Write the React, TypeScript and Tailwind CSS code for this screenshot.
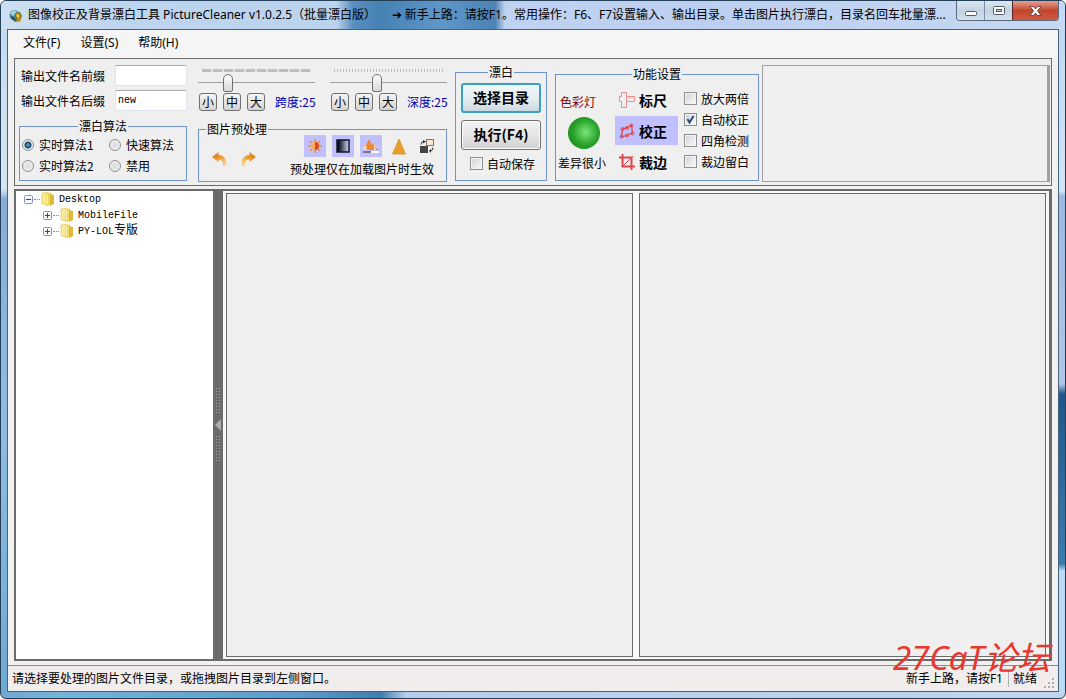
import { useState } from "react";
import type { ReactNode } from "react";

const uiFont = "font-['Noto_Sans','Noto_Sans_CJK_SC',sans-serif]";
const cjkFont = "font-['Noto_Sans_CJK_SC',sans-serif]";

function AppIcon() {
  return (
    <svg width="13" height="13" viewBox="0 0 13 13" className="shrink-0" aria-hidden="true">
      <circle cx="5.5" cy="6" r="5" fill="#4d8fb0" />
      <path d="M1 4l4-3 3 2-4 4z" fill="#a8d7e8" />
      <path d="M6 4l5-1 2 4-2 5-6 1z" fill="#6f7a2a" />
      <path d="M7 5l3 0 1 3-3 1z" fill="#f0bf3c" />
      <path d="M1 7l4 1 2 4-4-1z" fill="#28536f" />
      <path d="M8 10l3-2 1 4-3 1z" fill="#c98a23" />
    </svg>
  );
}

function TitleBar() {
  return (
    <header className="flex h-7 shrink-0 items-start bg-[linear-gradient(90deg,#cddff0_0,#bdd4ee_140px,#bcd3ee_335px,#5a8fc0_352px,#4681b4_380px,#5f97c9_440px,#4c82b4_494px,#bfd2f0_504px,#bccff0_700px,#c6d8f2_100%)] pl-2">
      <div className="flex h-7 min-w-0 flex-1 items-center gap-1.5">
        <AppIcon />
        <h1 className="truncate text-xs leading-5 text-black">
          图像校正及背景漂白工具 PictureCleaner v1.0.2.5（批量漂白版）&nbsp;&nbsp;&nbsp;&nbsp; ➔ 新手上路：请按F1。常用操作：F6、F7设置输入、输出目录。单击图片执行漂白，目录名回车批量漂...
        </h1>
      </div>
      <div className="mr-1.5 flex h-5 shrink-0 overflow-hidden rounded-b border border-t-0 border-[#59697e]">
        <button type="button" aria-label="最小化" className="flex w-7 items-center justify-center border-r border-[#7b8da3] bg-linear-to-b from-[#dce7f3] via-[#c3d2e3] to-[#d3e2f1]">
          <svg width="12" height="14" viewBox="0 0 12 14">
            <rect x="0.5" y="7.5" width="11" height="4" rx="1" fill="#fff" stroke="#535a66" />
          </svg>
        </button>
        <button type="button" aria-label="最大化" className="flex w-[27px] items-center justify-center bg-linear-to-b from-[#dce7f3] via-[#c3d2e3] to-[#d3e2f1]">
          <svg width="12" height="12" viewBox="0 0 12 12">
            <rect x="0.5" y="1.5" width="11" height="8" rx="1" fill="#fff" stroke="#535a66" />
            <rect x="3.5" y="4.5" width="5" height="2" fill="#c3d2e3" stroke="#535a66" />
          </svg>
        </button>
        <button type="button" aria-label="关闭" className="flex w-[46px] items-center justify-center border-l border-[#5b2324] bg-linear-to-b from-[#e3a08f] via-[#c3442c] to-[#cf5a40]">
          <svg width="13" height="12" viewBox="0 0 13 12">
            <path d="M1 1.500h3.500l2 2.500 2-2.500H12L8.500 6 12 10.500H8.500l-2-2.500-2 2.500H1L4.500 6z" fill="#fff" stroke="#5a3138" strokeWidth=".8" />
          </svg>
        </button>
      </div>
    </header>
  );
}

function MenuBar() {
  return (
    <nav className="flex h-7 shrink-0 items-center gap-5 bg-[#f5f5f5] px-[15px] pb-0.5 text-xs text-black">
      <button type="button">文件(F)</button>
      <button type="button">设置(S)</button>
      <button type="button">帮助(H)</button>
    </nav>
  );
}

function Group({ title, className = "", legendClass = "", children }: {
  title: string;
  className?: string;
  legendClass?: string;
  children: ReactNode;
}) {
  return (
    <fieldset className={`min-w-0 border border-[#6f95c8] ${className}`}>
      <legend className={`px-px leading-[14px] ${legendClass}`}>{title}</legend>
      {children}
    </fieldset>
  );
}

function NameField({ id, label, value }: { id: string; label: string; value: string }) {
  return (
    <div className="flex items-center justify-between">
      <label htmlFor={id} className="pl-0.5">{label}</label>
      <input
        id={id}
        type="text"
        defaultValue={value}
        className="h-[21px] w-[72px] border border-[#e2e3ea] border-t-[#abadb3] bg-white px-0.5 font-['Liberation_Mono',monospace] text-[10px]"
      />
    </div>
  );
}

function Radio({ label, checked }: { label: string; checked?: boolean }) {
  return (
    <label className="flex items-center gap-[5px]">
      <input
        type="radio"
        name="algorithm"
        defaultChecked={checked}
        className="size-3 appearance-none rounded-full border border-[#8e8f8f] bg-[radial-gradient(circle,#d8dadc,#f6f6f6)] checked:bg-[radial-gradient(circle,#5fb5e0_0,#173f63_3px,#e8edf0_4px)]"
      />
      {label}
    </label>
  );
}

function CheckBox({ label, checked }: { label: string; checked?: boolean }) {
  return (
    <label className="flex h-[21px] items-center gap-1">
      <span className="grid">
        <input
          type="checkbox"
          defaultChecked={checked}
          className="peer col-start-1 row-start-1 size-[13px] appearance-none border border-[#8e8f8f] bg-linear-to-br from-[#cfd3d7] to-[#fafafa] shadow-[inset_0_0_0_1px_#f4f4f4]"
        />
        <svg viewBox="0 0 13 13" className="pointer-events-none invisible col-start-1 row-start-1 size-[13px] peer-checked:visible">
          <path d="M3.500 6l2 3.500L9.500 3" fill="none" stroke="#30487c" strokeWidth="2" />
        </svg>
      </span>
      {label}
    </label>
  );
}

function Tuner({ name, max, tickClass }: { name: string; max: number; tickClass: string }) {
  const [value, setValue] = useState(25);
  return (
    <div className="w-[121px]">
      <div className={`mx-1 mt-1 h-[3px] w-[109px] ${tickClass}`} />
      <input
        type="range"
        aria-label={name}
        min={0}
        max={max}
        value={value}
        onChange={(e) => setValue(Number(e.target.value))}
        className="block h-[21px] w-[117px] appearance-none bg-[linear-gradient(#a0a0a0,#a0a0a0)] bg-[length:100%_1px] bg-center bg-no-repeat [&::-webkit-slider-thumb]:h-[18px] [&::-webkit-slider-thumb]:w-[10px] [&::-webkit-slider-thumb]:appearance-none [&::-webkit-slider-thumb]:rounded-xs [&::-webkit-slider-thumb]:rounded-t-[5px] [&::-webkit-slider-thumb]:border [&::-webkit-slider-thumb]:border-[#707070] [&::-webkit-slider-thumb]:bg-linear-to-b [&::-webkit-slider-thumb]:from-white [&::-webkit-slider-thumb]:to-[#d6d6d6]"
      />
      <div className="flex items-center gap-1.5 pl-px">
        {["小", "中", "大"].map((size) => (
          <button
            key={size}
            type="button"
            className="flex size-[18px] items-center justify-center rounded-[3px] border border-[#707070] bg-linear-to-b from-[#f4f4f4] to-[#d4d4d4] leading-none"
          >
            {size}
          </button>
        ))}
        <output className="ml-1 whitespace-nowrap text-[#0000b4]">{name}:{value}</output>
      </div>
    </div>
  );
}

function IconToggle({ label, active, children }: { label: string; active?: boolean; children: ReactNode }) {
  return (
    <button
      type="button"
      aria-label={label}
      aria-pressed={!!active}
      className={`flex size-[22px] items-center justify-center ${active ? "bg-[#c0c0ff]" : ""}`}
    >
      {children}
    </button>
  );
}

function CurvedArrow({ flip }: { flip?: boolean }) {
  return (
    <svg width="16" height="16" viewBox="0 0 16 16" className={flip ? "-scale-x-100" : ""}>
      <path d="M0 6l6.500-5v3C12 4 15 8 14.500 15H11c.5-4-1-6.500-4.500-6.500V11z" fill="url(#arrow)" />
      <defs>
        <linearGradient id="arrow" x1="0" y1="0" x2="1" y2="1">
          <stop offset="0" stopColor="#d9720c" />
          <stop offset=".5" stopColor="#ee9c32" />
          <stop offset="1" stopColor="#fbe3b0" />
        </linearGradient>
      </defs>
    </svg>
  );
}

function Preprocess() {
  return (
    <Group title="图片预处理" className="mt-[11px] h-[60px] w-[249px]" legendClass="ml-[7px]">
      <div className="flex justify-between pr-3 pl-[13px]">
        <div className="flex items-center gap-3">
          <button type="button" aria-label="撤销"><CurvedArrow /></button>
          <button type="button" aria-label="重做"><CurvedArrow flip /></button>
        </div>
        <div>
          <div className="-mt-px -mr-1 flex justify-end gap-1.5">
            <IconToggle label="亮度" active>
              <svg width="16" height="16" viewBox="0 0 16 16">
                <path d="M8 1v3M8 12v3M1 8h3M12 8h3M3 3l2 2M11 11l2 2M13 3l-2 2M3 13l2-2" stroke="#f08a3c" strokeWidth="1.500" />
                <circle cx="8" cy="8" r="4" fill="#f7ae62" />
                <path d="M8 4a4 4 0 010 8z" fill="#e2461a" />
              </svg>
            </IconToggle>
            <IconToggle label="对比度" active>
              <svg width="16" height="16" viewBox="0 0 16 16">
                <defs>
                  <linearGradient id="contrast">
                    <stop offset="0.150" stopColor="#0a0f22" />
                    <stop offset="1" stopColor="#d5daf5" />
                  </linearGradient>
                </defs>
                <rect x="2" y="2" width="12" height="12" fill="url(#contrast)" stroke="#10142c" strokeWidth="1.500" />
              </svg>
            </IconToggle>
            <IconToggle label="色阶" active>
              <svg width="18" height="16" viewBox="0 0 18 16">
                <path d="M1 12V9l3-2 3-6 3 6 2-2 2 5 3 2z" fill="#ed8b35" />
                <path d="M1 12V9l3-2 1 5zM12 12V5l1 2 1 5z" fill="#f9d9b0" />
                <path d="M1 13h16v2H1z" fill="#fff" />
                <path d="M1 13h8v2H1z" fill="#82718f" />
              </svg>
            </IconToggle>
            <IconToggle label="锐化">
              <svg width="14" height="17" viewBox="0 0 14 17">
                <path d="M7 1l6.500 15H.5z" fill="#e8a02c" stroke="#d48a1c" strokeWidth=".7" />
              </svg>
            </IconToggle>
            <IconToggle label="反色">
              <svg width="16" height="16" viewBox="0 0 16 16">
                <rect x="7.500" y="1.500" width="7" height="6" fill="#fbe6cf" stroke="#777" />
                <rect x="1" y="8" width="8" height="7" fill="#444" />
                <path d="M2 6.500q0-3 3-3M14 9.500q0 3.500-3 3.500" fill="none" stroke="#333" />
                <path d="M4 2l3 1.500-3 2zM12 11v4l-2-2z" fill="#333" />
              </svg>
            </IconToggle>
          </div>
          <p className="leading-6">预处理仅在加载图片时生效</p>
        </div>
      </div>
    </Group>
  );
}

function ToolButton({ label, active, children }: { label: string; active?: boolean; children: ReactNode }) {
  return (
    <button
      type="button"
      aria-pressed={!!active}
      className={`flex h-[29px] w-[63px] items-center gap-1 pl-1 text-sm font-bold ${active ? "bg-[#c0c0ff]" : ""}`}
    >
      <svg width="16" height="16" viewBox="0 0 16 16" fill="none" stroke="#e0474c">
        {children}
      </svg>
      {label}
    </button>
  );
}

function FunctionSettings() {
  return (
    <Group title="功能设置" className="mt-0.5 h-[114px] w-[204px] shrink-0" legendClass="mx-auto">
      <div className="flex pl-0.5">
        <div className="flex w-[57px] flex-col justify-between pt-3 pb-1 leading-[18px]">
          <span className="pl-0.5 text-[#800000]">色彩灯</span>
          <span className="ml-2.5 size-8 rounded-full bg-[radial-gradient(circle_at_55%_48%,#7be47b_0,#2da42d_50%,#0b770b_100%)]" />
          <span>差异很小</span>
        </div>
        <div className="flex flex-col gap-0.5 pt-1">
          <ToolButton label="标尺">
            <path d="M2.500 .5h5v4h8v5h-8v6h-5v-6h-2v-5h2z" stroke="#ee8d8d" />
            <path d="M7.500 4.500v5M10.500 4.500v2M13 4.500v2" stroke="#ee8d8d" />
          </ToolButton>
          <ToolButton label="校正" active>
            <path d="M3.500 6l4-1 5-3 1 8-5 2-6 2z" strokeWidth="1.300" />
            <circle cx="3.500" cy="6" r="1.500" />
            <circle cx="12.500" cy="2.500" r="1.500" />
            <circle cx="13.500" cy="10.500" r="1.500" />
            <circle cx="2.500" cy="13.500" r="1.500" />
            <circle cx="8" cy="5" r="1.500" />
            <circle cx="8" cy="12.500" r="1.500" />
          </ToolButton>
          <ToolButton label="裁边">
            <path d="M0 3.500h12.500V16M3.500 0v12.500H16" strokeWidth="2" />
            <path d="M4 12l10-10" />
          </ToolButton>
        </div>
        <div className="flex flex-col pt-[7px] pl-1.5">
          <CheckBox label="放大两倍" />
          <CheckBox label="自动校正" checked />
          <CheckBox label="四角检测" />
          <CheckBox label="裁边留白" />
        </div>
      </div>
    </Group>
  );
}

function Toolbar() {
  return (
    <section className={`flex h-32 shrink-0 overflow-hidden border border-[#6b6b6b] bg-[#efefef] pt-1.5 pl-1 text-xs leading-4 text-black ${cjkFont}`}>
      <div className="w-[168px] shrink-0">
        <div className="flex flex-col gap-1">
          <NameField id="prefix" label="输出文件名前缀" value="" />
          <NameField id="suffix" label="输出文件名后缀" value="new" />
        </div>
        <Group title="漂白算法" className="mt-2 h-[62px]" legendClass="mx-auto">
          <div className="grid grid-cols-[87px_1fr] gap-y-[5px] pt-1 pl-0.5">
            <Radio label="实时算法1" checked />
            <Radio label="快速算法" />
            <Radio label="实时算法2" />
            <Radio label="禁用" />
          </div>
        </Group>
      </div>
      <div className="ml-[11px] w-[257px] shrink-0">
        <div className="flex gap-[11px]">
          <Tuner name="跨度" max={109} tickClass="bg-[repeating-linear-gradient(90deg,#bdbdbd_0_9px,#e2e2e2_9px_11px)]" />
          <Tuner name="深度" max={64} tickClass="bg-[repeating-linear-gradient(90deg,#bdbdbd_0_1px,transparent_1px_3px)]" />
        </div>
        <Preprocess />
      </div>
      <Group title="漂白" className="mr-2 h-[116px] w-[92px] shrink-0" legendClass="mx-auto">
        <div className="flex flex-col items-center gap-[7px] pt-1">
          <button type="button" className="h-[30px] w-20 rounded-[3px] border-2 border-[#3c9fc4] bg-linear-to-b from-[#f0f6f8] via-[#e6eef1] to-[#cbd9df] pb-0.5 text-sm font-bold">
            选择目录
          </button>
          <button type="button" className="h-[30px] w-20 rounded-[3px] border border-[#707070] bg-linear-to-b from-[#f2f2f2] via-[#e6e6e6] to-[#cfcfcf] pb-0.5 text-sm font-bold shadow-[inset_0_0_0_1px_#fafafa]">
            执行(F4)
          </button>
        </div>
        <div className="pt-[3px] pl-3.5"><CheckBox label="自动保存" /></div>
      </Group>
      <FunctionSettings />
      <div className="mr-px mb-[3px] ml-[3px] min-w-0 flex-1 border border-r-3 border-[#a0a0a0]" />
    </section>
  );
}

function Folder() {
  return (
    <svg width="14" height="16" viewBox="0 0 14 16" className="shrink-0">
      <path d="M1 2l6-1 1 13-7-1z" fill="#f8ec9c" stroke="#d8bc4e" strokeWidth=".6" />
      <path d="M5 3l5-2v13l-5 1z" fill="#eed65e" />
      <path d="M9 3l4 1v9l-4 2z" fill="#d9b93e" />
      <path d="M6 4l1-.5v9l-1 .5z" fill="#fff8cd" />
    </svg>
  );
}

function TreeItem({ expanded, children }: { expanded?: boolean; children: ReactNode }) {
  return (
    <div className="flex h-4 items-center">
      <button type="button" aria-label={expanded ? "折叠" : "展开"} className="size-[9px] shrink-0">
        <svg width="9" height="9" viewBox="0 0 9 9" className="block">
          <rect x=".5" y=".5" width="8" height="8" rx="1" fill="#f5f8fc" stroke="#8496b4" />
          <path d={expanded ? "M2 4.500h5" : "M2 4.500h5M4.500 2v5"} stroke="#27408b" />
        </svg>
      </button>
      <span className="mx-px w-1.5 border-t border-dotted border-[#888]" />
      <Folder />
      <span className="flex items-center pl-1 font-['Liberation_Mono','Noto_Sans_CJK_SC',monospace] text-[10px]">{children}</span>
    </div>
  );
}

function FolderTree() {
  return (
    <aside className="w-[199px] shrink-0 border-t-2 border-b-2 border-l-2 border-[#6b6b6b] bg-white pl-2 text-black">
      <TreeItem expanded>Desktop</TreeItem>
      <div className="pl-[19px]">
        <TreeItem>MobileFile</TreeItem>
        <TreeItem>PY-LOL<span className="text-xs">专版</span></TreeItem>
      </div>
    </aside>
  );
}

function Splitter() {
  return (
    <div className="flex w-[10px] shrink-0 flex-col items-center justify-center gap-1 bg-[#6b6b6b]">
      <span className="h-7 w-1.5 bg-[radial-gradient(#a2a2a2_1px,transparent_1px)] bg-[length:3px_3px]" />
      <svg width="6" height="12" viewBox="0 0 6 12"><path d="M6 0v12L0 6z" fill="#adadad" /></svg>
      <span className="h-7 w-1.5 bg-[radial-gradient(#a2a2a2_1px,transparent_1px)] bg-[length:3px_3px]" />
    </div>
  );
}

function StatusBar() {
  return (
    <footer className="flex h-[26px] shrink-0 items-center border-t border-[#8c8c8c] bg-[#f1eded] pt-px pl-1 text-xs text-black">
      <span className="min-w-0 flex-1 truncate">请选择要处理的图片文件目录，或拖拽图片目录到左侧窗口。</span>
      <span className="border-r border-[#b4b4b4] pr-[5px]">新手上路，请按F1</span>
      <span className="pr-[7px] pl-1">就绪</span>
      <svg width="13" height="13" viewBox="0 0 13 13" fill="#b0abab" className="mr-px self-end">
        <path d="M8 0h2v2H8zM8 4h2v2H8zM4 4h2v2H4zM8 8h2v2H8zM4 8h2v2H4zM0 8h2v2H0z" />
      </svg>
    </footer>
  );
}

export default function App() {
  return (
    <div className={`relative flex h-screen flex-col overflow-hidden rounded-md border border-[#263f59] bg-[linear-gradient(90deg,#6fa9d3_0,#73b5d9_60px,#5b9aca_300px,#3f7eb2_380px,#b4cdea_405px,#c0d5ed_100%)] ${uiFont}`}>
      <TitleBar />
      <div className="flex min-h-0 flex-1">
        <div className="w-1.5 shrink-0 bg-[linear-gradient(#c5daee_0,#d6e5f4_160px,#86add6_170px,#8fbce2_60%,#6fa9d3_100%)]" />
        <main className="flex min-w-0 flex-1 flex-col border border-[#45627e] bg-[#f1f1f1]">
          <MenuBar />
          <div className="flex min-h-0 flex-1 flex-col gap-[3px] px-1.5 pb-1">
            <Toolbar />
            <div className="flex min-h-0 flex-1">
              <FolderTree />
              <Splitter />
              <div className="flex min-w-0 flex-1 gap-1.5 border-t-2 border-r-3 border-b-2 border-[#6b6b6b] bg-[#f8f8f8] p-[3px] pt-0.5 pb-0.5">
                <div className="flex-1 border border-[#6b6b6b] bg-[#efefef]" />
                <div className="flex-1 border border-[#6b6b6b] bg-[#efefef]" />
              </div>
            </div>
          </div>
          <StatusBar />
        </main>
        <div className="w-1.5 shrink-0 bg-[linear-gradient(#c1d6f0_0,#d3e3f4_162px,#9db9e0_167px,#b3c4e6_355px,#1f568c_365px,#3c7db0_535px,#bddaf5_542px,#bddaf5_100%)]" />
      </div>
      <div className="h-1.5 shrink-0" />
      <span className="pointer-events-none absolute right-[15px] bottom-6 text-[33px] leading-8 text-[#e8372f] italic">27CaT论坛</span>
    </div>
  );
}
